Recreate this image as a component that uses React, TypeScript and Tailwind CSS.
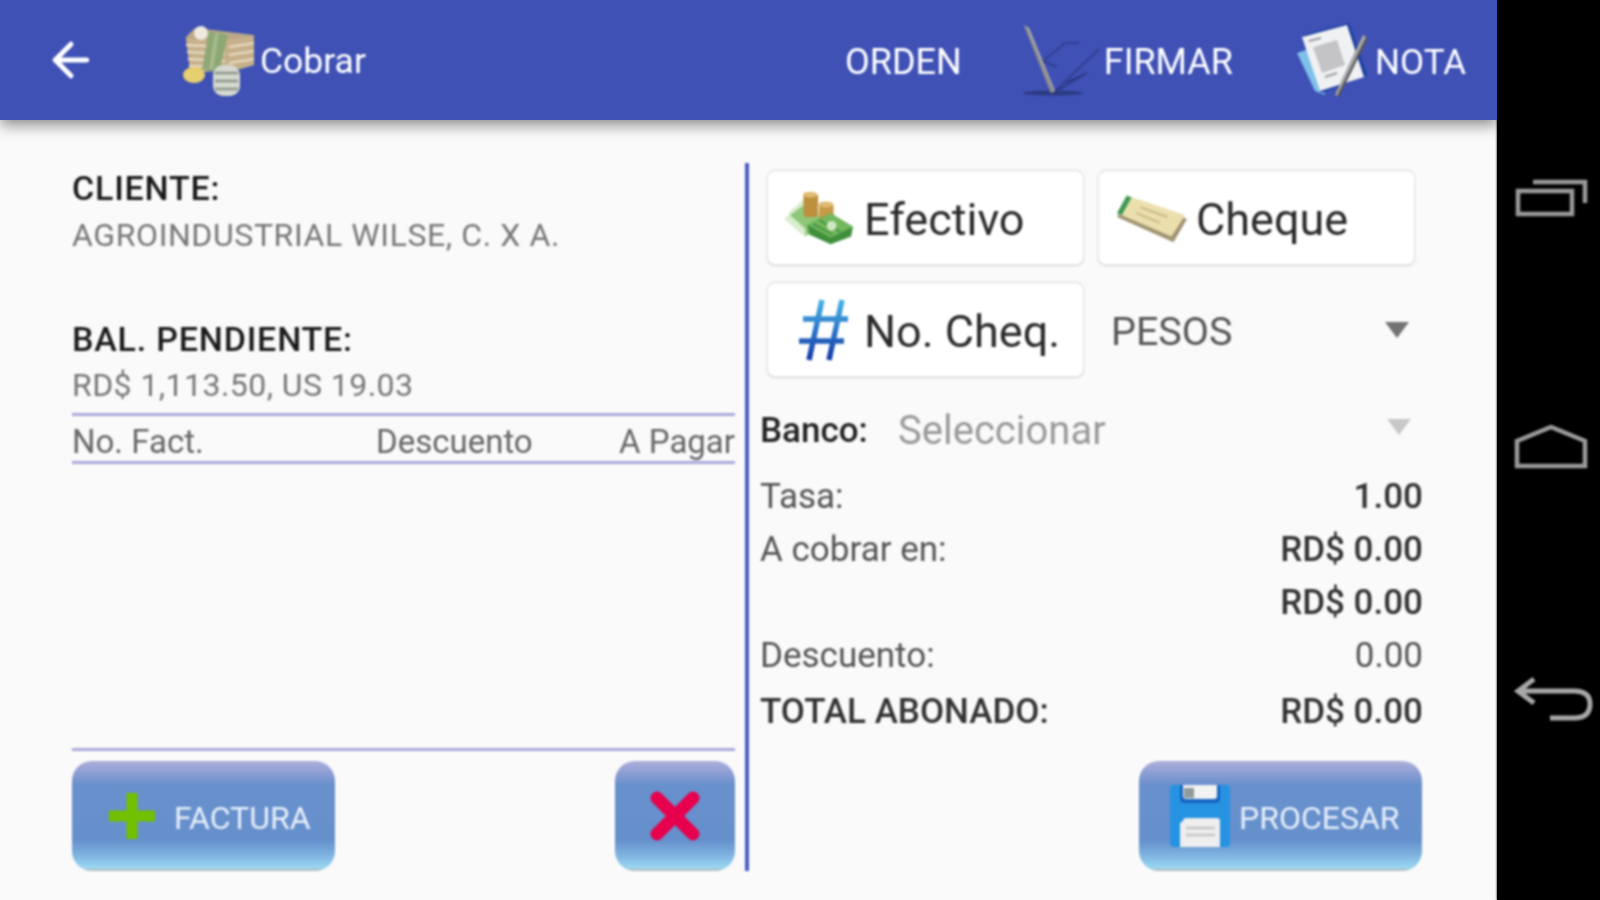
import { ArrowLeft } from "lucide-react"

const roboto = "font-['Roboto',sans-serif]"

const glossy =
  "bg-[linear-gradient(180deg,#aeb0da_0%,#8f9fd4_10%,#6890cc_22%,#6690cc_72%,#7fb4e0_86%,#9ad8f2_97%,#b8b8b8_100%)] rounded-[20px] flex items-center"

function CashIcon() {
  return (
    <svg viewBox="0 0 74 74" className="w-[74px] h-[74px] shrink-0">
      <path d="M5 14 L14 5 L40 8 L73 12 L73 42 L60 46 L10 50 Z" fill="#b9a888" />
      <path d="M5 15 L44 17 L73 13 L73 42 L44 48 L9 48 Z" fill="#c6b08a" />
      <path d="M5 22 L44 24 M6 29 L44 31 M7 36 L44 38 M8 43 L44 44 M48 24 L73 20 M48 32 L73 28 M48 40 L73 36" stroke="#e4d8be" strokeWidth="2.5" />
      <path d="M28 8 L47 12 L38 50 L21 46 Z" fill="#8ea874" />
      <path d="M36 10 L30 46" stroke="#a5ba8e" strokeWidth="4" />
      <circle cx="20" cy="10" r="7" fill="#eeeadd" />
      <ellipse cx="13" cy="52" rx="11" ry="8" fill="#e6cf6e" />
      <rect x="32" y="42" width="27" height="31" rx="10" fill="#d5d9cf" />
      <path d="M34 50 H57 M34 58 H57 M34 66 H57" stroke="#8d968a" strokeWidth="2.5" />
    </svg>
  )
}

function SignIcon() {
  return (
    <svg viewBox="0 0 80 74" className="w-[80px] h-[74px] shrink-0">
      <ellipse cx="30" cy="70" rx="30" ry="2.5" fill="#2c3a80" />
      <path d="M20 38 L42 20 L56 20 M34 44 L20 38 M76 26 L30 70 M30 70 L64 50 M42 60 L64 50" stroke="#2d3a86" strokeWidth="1.6" fill="none" />
      <path d="M1 2 L6 5 L32 68 L28 70 Z" fill="#bdbdb7" />
      <path d="M1 2 L4 4 L31 68 L28 70 Z" fill="#8d8d87" />
    </svg>
  )
}

function NoteIcon() {
  return (
    <svg viewBox="0 0 76 74" className="w-[76px] h-[74px] shrink-0">
      <path d="M2 30 L14 26 L30 72 L20 68 Z" fill="#7fc0ea" />
      <path d="M8 12 L54 0 L72 52 L26 70 Z" fill="#1b3ea0" />
      <path d="M7 14 L52 2 L69 54 L25 68 Z" fill="#f0f1f3" />
      <path d="M18 24 L42 17 L50 42 L27 50 Z" fill="#c4c4c6" />
      <path d="M14 18 L26 15 M30 54 L42 50" stroke="#9b9b9f" strokeWidth="2" />
      <path d="M68 12 L73 15 L44 74 L40 72 Z" fill="#555" />
      <path d="M68 12 L71 14 L42 73 L40 72 Z" fill="#aaa" />
    </svg>
  )
}

function CoinsIcon() {
  return (
    <svg viewBox="0 0 72 54" className="w-[70px] h-[54px] shrink-0">
      <path d="M1 28 L20 12 L44 30 L22 46 Z" fill="#8ec777" />
      <path d="M1 28 L22 46 L22 38 L4 22 L20 8 L40 24 L44 30 L20 14 Z" fill="#d9edcf" />
      <rect x="20" y="2" width="15" height="24" rx="3" fill="#bd8f3e" />
      <rect x="36" y="12" width="15" height="16" rx="3" fill="#c79a45" />
      <ellipse cx="27" cy="3" rx="7.5" ry="3" fill="#dfbb71" />
      <ellipse cx="43" cy="13" rx="7.5" ry="3" fill="#dfbb71" />
      <path d="M24 34 L48 22 L71 36 L69 46 L48 54 L26 44 Z" fill="#3f8f3c" />
      <path d="M24 34 L48 22 L71 36 L48 47 Z" fill="#74b85e" />
      <path d="M30 33 L50 44 M36 29 L58 41" stroke="#4c9a46" strokeWidth="2.5" />
      <circle cx="49" cy="35" r="5" fill="#cfe8c2" />
    </svg>
  )
}

function ChequeIcon() {
  return (
    <svg viewBox="0 0 74 50" className="w-[72px] h-[50px] shrink-0">
      <path d="M12 4 L72 26 L58 50 L0 24 Z" fill="#8a7a4f" opacity="0.8" />
      <path d="M10 2 L70 22 L56 44 L0 20 Z" fill="#ecdfae" />
      <path d="M10 2 L15 4 L5 22 L0 20 Z" fill="#3f9a55" />
      <path d="M24 14 L52 24 M20 20 L44 30" stroke="#c9b984" strokeWidth="2" />
    </svg>
  )
}

function HashIcon() {
  return (
    <svg viewBox="0 0 52 62" className="w-[52px] h-[62px] shrink-0">
      <defs>
        <linearGradient id="hash" x1="0" y1="0" x2="0" y2="1">
          <stop offset="0" stopColor="#46b4e6" />
          <stop offset="1" stopColor="#1238a8" />
        </linearGradient>
      </defs>
      <path
        d="M24 1 L11 61 M44 1 L31 61 M5 20 H50 M1 42 H46"
        stroke="url(#hash)"
        strokeWidth="5.5"
        fill="none"
      />
    </svg>
  )
}

function Caret({ light }: { light?: boolean }) {
  return (
    <svg viewBox="0 0 24 16" className="w-[24px] h-[16px]">
      <path d="M0 0 H24 L12 16 Z" fill={light ? "#c8c8c8" : "#737373"} />
    </svg>
  )
}

function PayButton({ icon, label, pad }: { icon: React.ReactNode; label: string; pad: string }) {
  return (
    <div
      className={`w-[317px] h-[95px] bg-white rounded-[8px] border border-[#e6e6e6] border-t-[#d8d8d8] shadow-[0_1px_2px_rgba(0,0,0,0.15)] flex items-center ${pad}`}
    >
      {icon}
      <span className="pt-[4px] text-[45px] text-[#2a2a2a] leading-none">{label}</span>
    </div>
  )
}

const totals = [
  { label: "Tasa:", value: "1.00", bold: true, h: "h-[53px]" },
  { label: "A cobrar en:", value: "RD$ 0.00", bold: true, h: "h-[53px]" },
  { label: "", value: "RD$ 0.00", bold: true, h: "h-[52px]" },
  { label: "Descuento:", value: "0.00", bold: false, h: "h-[54px]" },
]

export default function App() {
  return (
    <div className={`flex w-[1600px] h-[900px] overflow-hidden bg-black ${roboto}`}>
      <div className="w-[1497px] h-full flex flex-col bg-[#fafafa]">
        {/* Action bar */}
        <header className="relative z-10 h-[120px] shrink-0 bg-[#3f51b5] text-white shadow-[0_5px_14px_rgba(0,0,0,0.45)]">
          <div className="h-full flex items-center blur-[0.8px]">
            <ArrowLeft className="ml-[44px] w-[54px] h-[54px]" strokeWidth={2.2} />
            <div className="ml-[83px]">
              <CashIcon />
            </div>
            <span className="ml-[5px] mt-[4px] text-[35.5px] leading-none">Cobrar</span>
            <div className="ml-auto flex items-center pr-[31px]">
              <span className="mt-[4px] text-[36px] leading-none">ORDEN</span>
              <div className="ml-[61px]">
                <SignIcon />
              </div>
              <span className="ml-[1px] mt-[4px] text-[36px] leading-none">FIRMAR</span>
              <div className="ml-[62px]">
                <NoteIcon />
              </div>
              <span className="ml-[4px] mt-[4px] text-[35px] leading-none">NOTA</span>
            </div>
          </div>
        </header>

        <main className="flex-1 flex pl-[72px] pt-[43px] blur-[0.8px]">
          {/* Left column */}
          <section className="w-[663px] h-[708px] flex flex-col">
            <p className="mt-[5px] h-[40px] text-[34px] leading-[40px] font-medium tracking-[0.8px] text-[#1a1a1a]">CLIENTE:</p>
            <p className="mt-[9px] h-[36px] text-[32px] leading-[36px] text-[#777] tracking-[0.6px]">
              AGROINDUSTRIAL WILSE, C. X A.
            </p>
            <p className="mt-[66px] h-[40px] text-[34px] leading-[40px] font-medium tracking-[0.8px] text-[#1a1a1a]">BAL. PENDIENTE:</p>
            <p className="mt-[8px] h-[36px] text-[32px] leading-[36px] text-[#777] tracking-[0.45px]">
              RD$ 1,113.50, US 19.03
            </p>
            <div className="mt-[10px] h-[51px] pt-[7px] border-y-[3px] border-[#a9a9dc] flex items-center justify-between text-[33px] text-[#666]">
              <span className="w-[304px]">No. Fact.</span>
              <span>Descuento</span>
              <span className="ml-auto">A Pagar</span>
            </div>
            <div className="flex-1" />
            <div className="h-[3px] bg-[#a9a9dc]" />
            <div className="mt-[10px] flex justify-between">
              <div className={`${glossy} w-[263px] h-[110px] pl-[37px]`}>
                <svg viewBox="0 0 46 46" className="w-[46px] h-[46px]">
                  <path d="M23 2 V44 M2 23 H44" stroke="#72c000" strokeWidth="11" strokeLinecap="round" />
                </svg>
                <span className="ml-[19px] pt-[4px] text-[32px] text-[#e8effa]">FACTURA</span>
              </div>
              <div className={`${glossy} w-[120px] h-[110px] justify-center`}>
                <svg viewBox="0 0 50 50" className="w-[50px] h-[50px]">
                  <path d="M7 7 L43 43 M43 7 L7 43" stroke="#e6004d" strokeWidth="13" strokeLinecap="round" />
                </svg>
              </div>
            </div>
          </section>

          <div className="ml-[10px] w-[4px] h-[708px] bg-[#4a5cc0]" />

          {/* Right column */}
          <section className="ml-[11px] w-[663px] h-[708px] flex flex-col">
            <div className="mt-[7px] ml-[7px] flex gap-[14px]">
              <PayButton icon={<CoinsIcon />} label="Efectivo" pad="pl-[16px] gap-[10px]" />
              <PayButton icon={<ChequeIcon />} label="Cheque" pad="pl-[18px] gap-[7px]" />
            </div>
            <div className="mt-[17px] ml-[7px] flex items-center">
              <PayButton icon={<HashIcon />} label="No. Cheq." pad="pl-[30px] gap-[14px]" />
              <div className="ml-[27px] w-[298px] flex items-center justify-between">
                <span className="pt-[4px] text-[39.5px] text-[#555] leading-none">PESOS</span>
                <Caret />
              </div>
            </div>
            <div className="mt-[28px] h-[52px] flex items-center">
              <span className="w-[138px] text-[35px] font-medium text-[#222]">Banco:</span>
              <span className="text-[40px] text-[#999]">Seleccionar</span>
              <div className="ml-auto mr-[12px] -mt-[8px]">
                <Caret light />
              </div>
            </div>
            <div className="mt-[14px]">
              {totals.map((row, i) => (
                <div key={i} className={`${row.h} flex items-center justify-between text-[35px] text-[#555]`}>
                  <span>{row.label}</span>
                  <span className={row.bold ? "font-medium text-[#333]" : ""}>{row.value}</span>
                </div>
              ))}
              <div className="h-[58px] flex items-center justify-between text-[35px] font-medium text-[#333]">
                <span>TOTAL ABONADO:</span>
                <span>RD$ 0.00</span>
              </div>
            </div>
            <div className="mt-auto mr-[1px] flex justify-end">
              <div className={`${glossy} w-[283px] h-[110px] pl-[31px]`}>
                <svg viewBox="0 0 60 62" className="w-[60px] h-[62px]">
                  <path d="M4 0 H56 Q60 0 60 4 V58 Q60 62 56 62 H4 Q0 62 0 58 V4 Q0 0 4 0 Z" fill="#2592e2" />
                  <path d="M10 0 H50 V14 Q50 18 46 18 H14 Q10 18 10 14 Z" fill="#1565c0" />
                  <path d="M13 0 H47 V11 Q47 14 44 14 H16 Q13 14 13 11 Z" fill="#f2f2f2" />
                  <rect x="14" y="3" width="10" height="10" fill="#8c9a98" />
                  <path d="M13 36 Q13 33 16 33 H47 Q50 33 50 36 V62 H10 V38 Z" fill="#eeeeee" />
                  <path d="M16 43 H45 M16 50 H45" stroke="#c6c6c6" strokeWidth="2.5" />
                </svg>
                <span className="ml-[9px] pt-[4px] text-[32px] text-[#e8effa]">PROCESAR</span>
              </div>
            </div>
          </section>
        </main>
      </div>

      {/* Android nav bar */}
      <nav className="w-[103px] h-full bg-black relative blur-[0.8px]">
        <svg viewBox="0 0 74 42" className="absolute top-[179px] left-[18px] w-[74px] h-[42px]" fill="none" stroke="#9a9a9a" strokeWidth="4.5">
          <rect x="3" y="12" width="54" height="23" />
          <path d="M18 3 H70 V24" />
        </svg>
        <svg viewBox="0 0 74 44" className="absolute top-[425px] left-[17px] w-[74px] h-[44px]" fill="none" stroke="#9a9a9a" strokeWidth="4.5">
          <path d="M3 41 H71 V16 L37 2 L3 16 Z" />
        </svg>
        <svg viewBox="0 0 80 48" className="absolute top-[676px] left-[17px] w-[80px] h-[48px]" fill="none" stroke="#a8a8a8" strokeWidth="5">
          <path d="M20 3 L4 15 L20 27 M4 15 H60 Q76 15 76 28 Q76 42 60 42 H36" />
        </svg>
      </nav>
    </div>
  )
}
